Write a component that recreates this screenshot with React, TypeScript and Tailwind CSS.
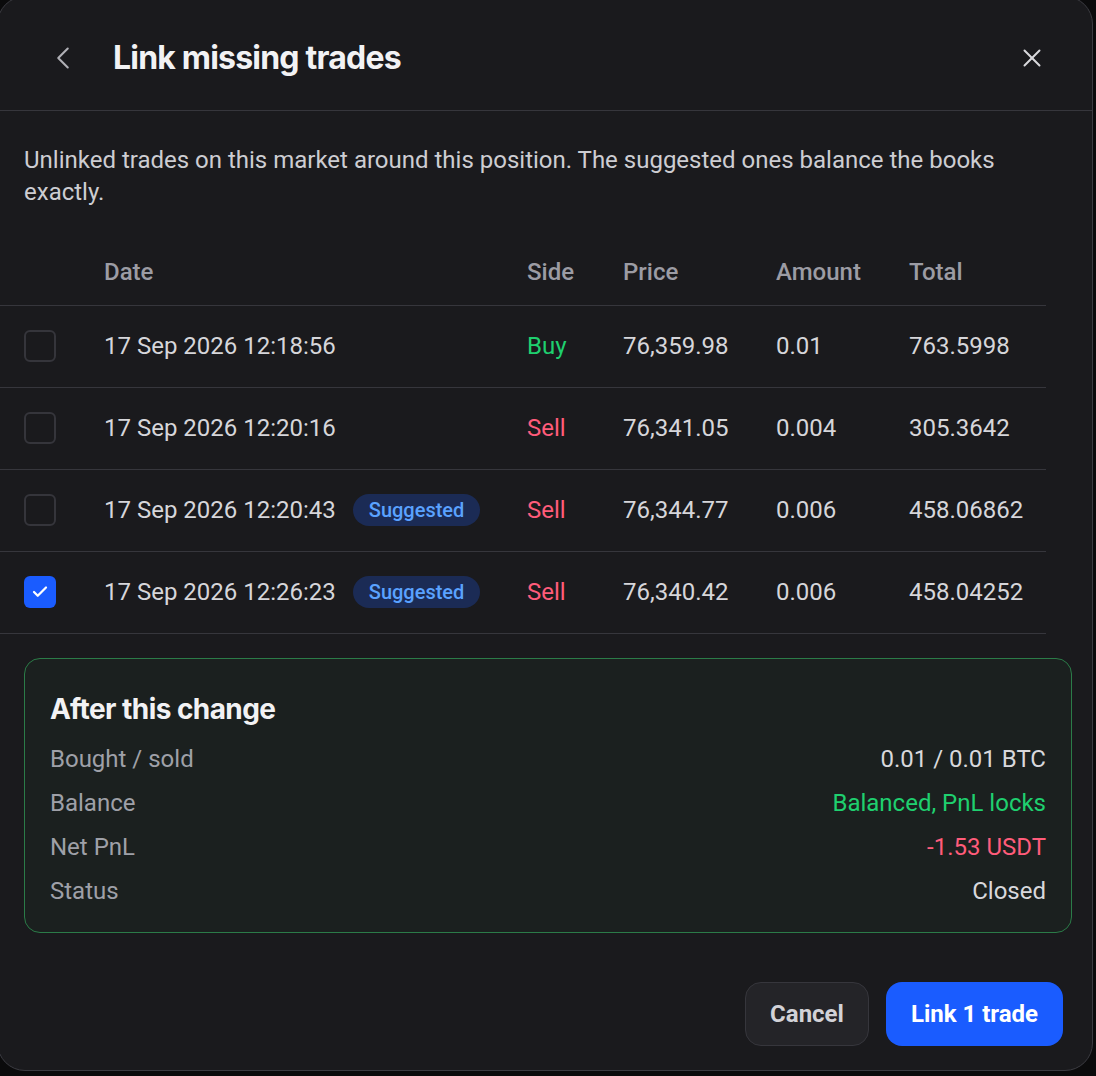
import { Check, ChevronLeft, X } from 'lucide-react'

// Link missing trades dialog — dark modal with trade table + summary card.

type Trade = {
  date: string
  side: 'Buy' | 'Sell'
  price: string
  amount: string
  total: string
  suggested?: boolean
  checked?: boolean
}

const trades: Trade[] = [
  { date: '17 Sep 2026 12:18:56', side: 'Buy', price: '76,359.98', amount: '0.01', total: '763.5998' },
  { date: '17 Sep 2026 12:20:16', side: 'Sell', price: '76,341.05', amount: '0.004', total: '305.3642' },
  { date: '17 Sep 2026 12:20:43', side: 'Sell', price: '76,344.77', amount: '0.006', total: '458.06862', suggested: true },
  {
    date: '17 Sep 2026 12:26:23',
    side: 'Sell',
    price: '76,340.42',
    amount: '0.006',
    total: '458.04252',
    suggested: true,
    checked: true,
  },
]

const cols = 'grid grid-cols-[104px_423px_96px_153px_133px_137px] items-center'
const heading = { fontFamily: 'Inter, "Noto Sans", sans-serif' }

export default function App() {
  return (
    <div
      className="h-[1076px] w-[1096px] overflow-hidden bg-[#0b0b0c]"
      style={{ fontFamily: 'Roboto, "Liberation Sans", sans-serif' }}
    >
      <div className="-ml-[3px] -mt-[4px] w-[1096px] rounded-[28px] border border-[#3b3b41] bg-[#1a1a1d]">
        <header className="flex h-[114px] items-center border-b border-[#36363c] pt-[8px]">
          <button type="button" className="ml-[46px] flex h-[38px] w-[38px] items-center justify-center text-[#b0b0b6]">
            <ChevronLeft size={38} strokeWidth={1.3} />
          </button>
          <h1
            className="ml-[31px] text-[32px] font-bold tracking-[-0.025em] text-[#f2f2f4]"
            style={heading}
          >
            Link missing trades
          </h1>
          <button type="button" className="ml-auto mr-[45px] flex h-[30px] w-[30px] items-center justify-center text-[#d8d8dc]">
            <X size={30} strokeWidth={1.6} />
          </button>
        </header>

        <div className="pl-[26px] pr-[20px]">
          <p className="mt-[33px] pr-[60px] text-[24px] leading-[32px] text-[#cdcdd2]">
            Unlinked trades on this market around this position. The suggested ones balance the books exactly.
          </p>

          <div className="-ml-[24px] mt-[31px] w-[1046px]">
            <div className={`${cols} h-[67px] border-b border-[#36363c] text-[24px] font-medium text-[#9c9ca4]`}>
              <span />
              <span>Date</span>
              <span>Side</span>
              <span>Price</span>
              <span>Amount</span>
              <span>Total</span>
            </div>
            {trades.map((t) => (
              <div key={t.date} className={`${cols} h-[82px] border-b border-[#36363c] pb-[2px] text-[24px] text-[#d6d6da]`}>
                <span className="pl-[24px]">
                  {t.checked ? (
                    <span className="flex h-8 w-8 items-center justify-center rounded-[6px] bg-[#1a5cff] text-white">
                      <Check size={18} strokeWidth={3} />
                    </span>
                  ) : (
                    <span className="block h-8 w-8 rounded-[6px] border-2 border-[#35353b]" />
                  )}
                </span>
                <span className="flex items-center gap-[17px]">
                  {t.date}
                  {t.suggested && (
                    <span className="inline-flex h-8 items-center rounded-full bg-[#1b2b55] px-4 text-[20px] font-medium text-[#5aa2ff]">
                      Suggested
                    </span>
                  )}
                </span>
                <span className={t.side === 'Buy' ? 'text-[#1fd06f]' : 'text-[#ff5c7a]'}>{t.side}</span>
                <span>{t.price}</span>
                <span>{t.amount}</span>
                <span>{t.total}</span>
              </div>
            ))}
          </div>

          <section className="mt-[24px] rounded-[16px] border border-[#2b7b48] bg-[#1b201f] px-[25px] pb-[19px] pt-[32px]">
            <h2 className="text-[28px] font-bold leading-[36px] tracking-[-0.02em] text-[#f2f2f4]" style={heading}>
              After this change
            </h2>
            <div className="mt-[10px] text-[24px]">
              <Row label="Bought / sold" value="0.01 / 0.01 BTC" />
              <Row label="Balance" value="Balanced, PnL locks" tone="text-[#1fd06f]" />
              <Row label="Net PnL" value="-1.53 USDT" tone="text-[#ff5c7a]" />
              <Row label="Status" value="Closed" />
            </div>
          </section>
        </div>

        <footer className="mt-[49px] flex justify-end gap-[17px] pb-[24px] pr-[29px]">
          <button
            type="button"
            className="h-16 w-[124px] rounded-[16px] border border-[#36363c] bg-[#242428] text-[24px] font-bold text-[#d2d2d7]"
          >
            Cancel
          </button>
          <button
            type="button"
            className="h-16 w-[177px] rounded-[16px] bg-[#1a5cff] text-[24px] font-bold text-white"
          >
            Link 1 trade
          </button>
        </footer>
      </div>
    </div>
  )
}

function Row({ label, value, tone = 'text-[#d8d8dc]' }: { label: string; value: string; tone?: string }) {
  return (
    <div className="flex h-[44px] items-center justify-between">
      <span className="text-[#9fa0a8]">{label}</span>
      <span className={tone}>{value}</span>
    </div>
  )
}
